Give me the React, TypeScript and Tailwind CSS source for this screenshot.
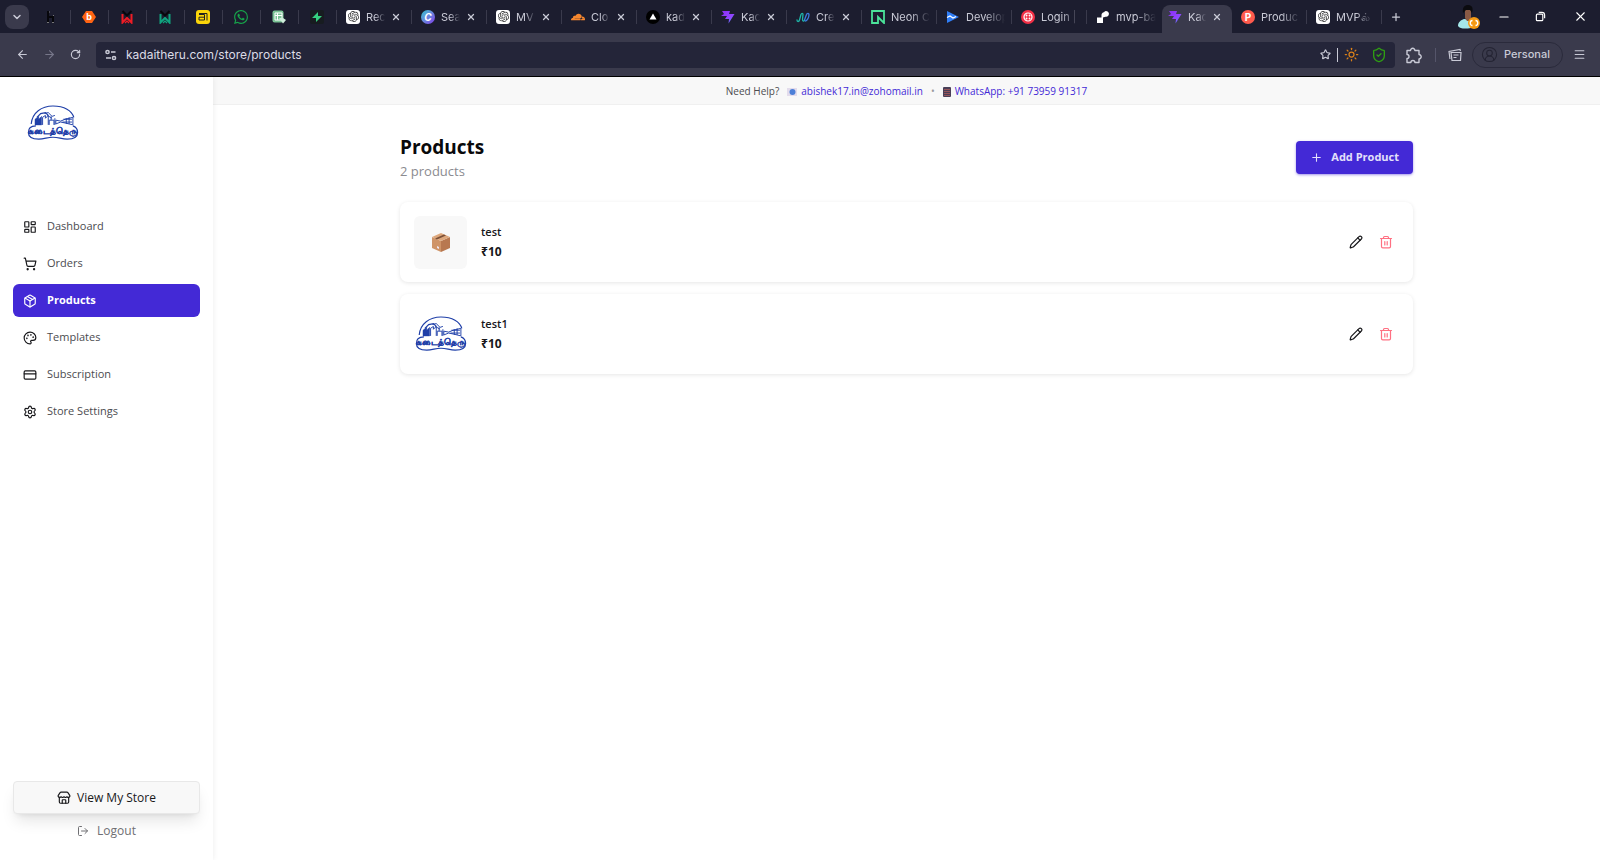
import type { ReactNode } from "react";
import {
  ArrowLeft,
  ArrowRight,
  ChevronDown,
  CreditCard,
  LayoutDashboard,
  LogOut,
  Menu,
  Minus,
  Package,
  Palette,
  Pencil,
  Plus,
  RotateCw,
  Settings,
  ShieldCheck,
  ShoppingCart,
  Star,
  Store,
  Sun,
  CircleUserRound,
  X,
} from "lucide-react";
import { SiCloudflare, SiOpenai, SiWhatsapp } from "react-icons/si";

function Letter({ char, className }: { char: string; className: string }) {
  return (
    <span className={`flex size-3.5 shrink-0 items-center justify-center text-[10px] leading-none font-bold ${className}`}>
      {char}
    </span>
  );
}

function DoubleW({ color }: { color: string }) {
  return (
    <svg viewBox="0 0 14 14" className="size-3.5" fill="none" strokeWidth="2">
      <path d="M2.500 4v8.500L7 8l4.500 4.500V4" stroke={color} />
      <path d="M5 13l2-2 2 2" stroke={color} strokeWidth="1.200" />
      <path d="M2.500 1L7 5.500 11.500 1" stroke="#07070c" />
    </svg>
  );
}

function ChatFavicon() {
  return (
    <span className="flex size-3.5 shrink-0 items-center justify-center rounded-[3px] bg-white">
      <SiOpenai size={11} color="#333" />
    </span>
  );
}

function KadaiFavicon() {
  return (
    <svg viewBox="0 0 14 14" className="size-3.5 shrink-0">
      <defs>
        <linearGradient id="kadai" x1="0" y1="0" x2="1" y2="1">
          <stop offset="0" stopColor="#8b2cf5" />
          <stop offset="0.600" stopColor="#9146ff" />
          <stop offset="1" stopColor="#3fa0ff" />
        </linearGradient>
      </defs>
      <path d="M1 1h8L8 4h5.500L7.500 13.500 8 9H4l2-3H0l3-2z" fill="url(#kadai)" />
    </svg>
  );
}

const iconTabs: { name: string; icon: ReactNode }[] = [
  {
    name: "h",
    icon: (
      <svg viewBox="0 0 14 14" className="size-3.5">
        <path d="M4 1v11M4 7h5v5" stroke="#07070c" strokeWidth="2" fill="none" />
        <path d="M3 12.500h2M8 12.500h2M5 2h1M9 5.500h1" stroke="#777" />
      </svg>
    ),
  },
  {
    name: "b",
    icon: (
      <span className="relative flex size-3.5 items-center justify-center">
        <svg viewBox="0 0 14 14" className="absolute size-3.5">
          <path d="M4 1h6l4 6-4 6H4L0 7z" fill="#ff6413" />
        </svg>
        <span className="relative text-[9px] leading-none font-bold text-white">b</span>
      </span>
    ),
  },
  { name: "w red", icon: <DoubleW color="#ee1c25" /> },
  { name: "w green", icon: <DoubleW color="#10a37f" /> },
  {
    name: "yellow",
    icon: (
      <svg viewBox="0 0 14 14" className="size-3.5">
        <rect width="14" height="14" rx="3" fill="#fbd50a" />
        <path d="M3 4.500h5.500V10H3V7.200h5M3 3.500h8v7" stroke="#222" fill="none" />
      </svg>
    ),
  },
  { name: "whatsapp", icon: <SiWhatsapp size={14} color="#17a34a" /> },
  {
    name: "sheets",
    icon: (
      <svg viewBox="0 0 14 14" className="size-3.5">
        <rect x="0.500" y="0.500" width="11" height="12" rx="2" fill="#7bc396" />
        <path d="M3 3h7v7H3zM3 5.500h7M5.500 3v7" stroke="#fff" fill="none" />
        <path d="M7 8l4 5.500L14 10l-3-2z" fill="#cfeedb" />
      </svg>
    ),
  },
  {
    name: "supabase",
    icon: (
      <svg viewBox="0 0 14 14" className="size-3.5">
        <rect width="14" height="14" rx="2" fill="#171c20" />
        <path d="M8 2L2 8h4v4l6-6H8z" fill="#35d07f" />
      </svg>
    ),
  },
];

type Tab = { title: string; icon: ReactNode; close?: boolean; active?: boolean; divider?: boolean };

const tabs: Tab[] = [
  { title: "Rec", icon: <ChatFavicon />, close: true, divider: true },
  {
    title: "Sea",
    icon: <Letter char="C" className="rounded-full bg-linear-to-br from-[#00c4cc] to-[#7d2ae8] text-white italic" />,
    close: true,
    divider: true,
  },
  { title: "MV", icon: <ChatFavicon />, close: true, divider: true },
  { title: "Clo", icon: <SiCloudflare size={14} color="#f6872f" className="shrink-0" />, close: true, divider: true },
  {
    title: "kad",
    icon: (
      <svg viewBox="0 0 14 14" className="size-3.5 shrink-0">
        <circle cx="7" cy="7" r="7" fill="#000" />
        <path d="M7 3.500l3.500 6h-7z" fill="#fff" />
      </svg>
    ),
    close: true,
    divider: true,
  },
  { title: "Kac", icon: <KadaiFavicon />, close: true, divider: true },
  {
    title: "Cre",
    icon: (
      <svg viewBox="0 0 14 14" className="size-3.5 shrink-0" fill="none" strokeWidth="1.300" strokeLinecap="round">
        <path d="M1 10c0 2 2 2 2.500 0L5 4.500C5.500 3 7 3 7 4.500l-.5 5C6.500 11.500 8 11.500 8.500 10" stroke="#1fb5a8" />
        <path d="M8.500 10l2-5.500C11 3 13 3 13 4.500c0 3-2 6.500-3.500 6.500" stroke="#3d7be0" />
      </svg>
    ),
    close: true,
    divider: true,
  },
  {
    title: "Neon C",
    icon: (
      <svg viewBox="0 0 14 14" className="size-3.5 shrink-0">
        <path d="M7 13H1V1h12v12L7 7z" fill="none" stroke="#4be39a" strokeWidth="1.800" />
      </svg>
    ),
    divider: true,
  },
  {
    title: "Develop",
    icon: (
      <svg viewBox="0 0 14 14" className="size-3.5 shrink-0">
        <path d="M1 1l12 6L1 13z" fill="#2f7df6" />
        <path d="M1 7.500l3-1.500 3 2 3-1.500" stroke="#fff" strokeWidth="1.200" fill="none" />
      </svg>
    ),
    divider: true,
  },
  {
    title: "Login | T",
    icon: (
      <svg viewBox="0 0 14 14" className="size-3.5 shrink-0">
        <circle cx="7" cy="7" r="7" fill="#f22f46" />
        <circle cx="7" cy="7" r="4" fill="none" stroke="#fff" strokeWidth="1.200" />
        <path d="M5.500 5.500h.1M8.500 5.500h.1M5.500 8.500h.1M8.500 8.500h.1" stroke="#fff" strokeWidth="1.800" strokeLinecap="round" />
      </svg>
    ),
    divider: true,
  },
  {
    title: "mvp-ba",
    icon: (
      <svg viewBox="0 0 14 14" className="size-3.5 shrink-0">
        <path d="M1 7.500h4.500V5c0-1.500 1-2.500 2.500-2.800a2.800 2.800 0 1 1 1.500 4.500L7 7.500V13H1z" fill="#fff" />
      </svg>
    ),
  },
  { title: "Kac", icon: <KadaiFavicon />, close: true, active: true },
  {
    title: "Produc",
    icon: <Letter char="P" className="rounded-full bg-[#ff5a4d] text-white" />,
    divider: true,
  },
  { title: "MVPல்", icon: <ChatFavicon />, divider: true },
];

function BrowserTabs() {
  return (
    <div className="flex h-[33px] items-center bg-[#1c1d2f] pl-[5px] text-[#c9cad6]">
      <button aria-label="Search tabs" className="flex size-6 shrink-0 items-center justify-center rounded-lg bg-[#3a3a4c]">
        <ChevronDown size={12} strokeWidth={3} />
      </button>
      <div className="ml-1 flex min-w-0 items-center self-stretch">
        {iconTabs.map((tab) => (
          <button key={tab.name} aria-label={tab.name} className="flex h-full w-[38px] shrink-0 items-center justify-between pl-[11px]">
            {tab.icon}
            <span className="h-3.5 w-px bg-[#3a3a4c]" />
          </button>
        ))}
        {tabs.map((tab, i) => (
          <div
            key={i}
            className={
              tab.active
                ? "mt-[5px] flex h-7 w-[70px] shrink-0 items-center rounded-t-lg bg-[#3a3a4c] pr-2.5 pb-1 pl-1.5"
                : "flex h-full w-[75px] shrink-0 items-center pl-[9px]"
            }
          >
            {tab.icon}
            <span className="ml-1.5 min-w-0 flex-1 overflow-hidden mask-r-from-50% text-[11px] leading-4 whitespace-nowrap">
              {tab.title}
            </span>
            {tab.close && (
              <button aria-label="Close tab" className={tab.active ? "ml-1.5" : "mr-2.5 ml-1.5"}>
                <X size={10} strokeWidth={3} />
              </button>
            )}
            {!tab.close && <span className="w-1.5" />}
            {tab.divider && <span className="h-3.5 w-px bg-[#3a3a4c]" />}
          </div>
        ))}
      </div>
      <button aria-label="New tab" className="ml-2 shrink-0">
        <Plus size={12} strokeWidth={2.5} />
      </button>
      <div className="ml-auto flex shrink-0 items-center pr-3 text-white">
        <svg viewBox="0 0 24 26" className="mr-4 h-[26px] w-6">
          <path d="M1 22c0-4 3-6 6-7l7 1v8c-6 1-11 1-13-2z" fill="#a5e8ea" />
          <path d="M8 6h6v8l-2 3h-2l-2-3z" fill="#8a5a45" />
          <path d="M6 9c-1-6 2-8 5-8s6 2 4 8l-2-3H9z" fill="#0b0b0f" />
          <circle cx="17" cy="19" r="6" fill="#f59a14" />
          <path d="M15.500 16.500c-3 0-3 5 0 5M18.500 16.500c3 0 3 5 0 5" stroke="#fff" strokeWidth="1.300" fill="none" />
        </svg>
        <button aria-label="Minimize" className="mr-6">
          <Minus size={14} />
        </button>
        <button aria-label="Restore" className="mr-[27px]">
          <svg viewBox="0 0 12 12" className="size-[11px]" fill="none" stroke="currentColor" strokeWidth="1.300">
            <rect x="1.500" y="3.500" width="7" height="7" rx="1" />
            <path d="M4 1.500h3.500a3 3 0 0 1 3 3V8" />
          </svg>
        </button>
        <button aria-label="Close window">
          <X size={15} strokeWidth={1.7} />
        </button>
      </div>
    </div>
  );
}

function BrowserToolbar() {
  return (
    <div className="flex h-[44px] items-center border-b border-black bg-[#3a3a4c] pr-3.5 pl-4 text-[#c9cad6]">
      <button aria-label="Back" className="mr-3.5">
        <ArrowLeft size={13} />
      </button>
      <button aria-label="Forward" className="mr-3.5 text-[#77778a]">
        <ArrowRight size={13} />
      </button>
      <button aria-label="Reload">
        <RotateCw size={11} strokeWidth={2.5} />
      </button>
      <div className="mr-2.5 ml-[15px] flex h-[26px] min-w-0 flex-1 items-center rounded-sm bg-[#242539] px-2">
        <svg viewBox="0 0 14 14" className="mr-2 size-3.5" fill="none" stroke="currentColor" strokeWidth="1.500">
          <circle cx="3.500" cy="4" r="1.600" />
          <path d="M7 4h4.500M2 10h5" />
          <circle cx="10" cy="10" r="1.600" />
        </svg>
        <input
          aria-label="Address"
          defaultValue="kadaitheru.com/store/products"
          className="min-w-0 flex-1 bg-transparent text-[12px] leading-4 text-[#dcdce6] outline-none"
        />
        <Star size={11} strokeWidth={2.5} />
        <span className="mx-1.5 h-3.5 w-px bg-[#c9cad6]" />
        <Sun size={15} color="#d9801a" className="mr-3" />
        <ShieldCheck size={16} color="#2f9e13" />
      </div>
      <button aria-label="Extensions">
        <svg viewBox="0 0 18 18" className="size-[18px]" fill="none" stroke="currentColor" strokeWidth="1.400" strokeLinejoin="round">
          <path d="M2 4.500h3.500a2.200 2.200 0 1 1 4.400 0H14v4a2.200 2.200 0 1 1 0 4.400V16.500H9.900a2 2 0 0 0-4 0H2v-4a2 2 0 0 0 0-4z" />
        </svg>
      </button>
      <span className="mx-3 h-3.5 w-px bg-[#55556a]" />
      <button aria-label="Reading list" className="mr-2.5">
        <svg viewBox="0 0 14 14" className="size-3.5" fill="none" stroke="currentColor" strokeWidth="1.200">
          <path d="M3 4.500h10l-.5 8H4zM2 11L1 3.500 12 1.500l.5 1.500M5.500 7h5M5.500 9.500h3" />
        </svg>
      </button>
      <button className="mr-2.5 flex h-[26px] items-center gap-1.5 rounded-full border border-[#2a2a3b] pr-3 pl-2 text-[11px] font-medium">
        <CircleUserRound size={17} color="#242433" strokeWidth={1.5} />
        Personal
      </button>
      <button aria-label="Menu">
        <Menu size={13} />
      </button>
    </div>
  );
}

function StoreLogo() {
  return (
    <svg viewBox="0 0 54 38" className="h-9 w-[52px]" fill="none" stroke="#1f3fa8">
      <path d="M4 20C5 8 15 1 27 1c12 0 20 5 22 12" strokeWidth="1.200" />
      <path d="M8 21v-6l4-3v3l3-3v9z" fill="#1f3fa8" strokeWidth="0.500" />
      <path d="M10 13l4-4 5-1 3 3" strokeWidth="1.300" />
      <path d="M16 21v-8l3-2v3l3-3v10M18 9l4-1 4 4 3-1M21 11l5 3M23 21v-5h5v5M25 12v4M29 14v7" />
      <path d="M30 16l5 1 5-2 8-2v8l-8-2-5-1-5 2zM41 14v6M44 13v7M47 15h-9M47 18h-10" />
      <path d="M9 22C3 22 1 25 1 29c0 5 5 7 11 7 6 0 9-2 15-2s9 2 15 2c6 0 11-2 11-7 0-4-2-6-5-7" strokeWidth="1.200" />
      <text x="27" y="31" textAnchor="middle" fontSize="9" fontWeight="700" fill="#1f3fa8" stroke="#1f3fa8" strokeWidth="0.300">
        கடைத்தெரு
      </text>
    </svg>
  );
}

function BoxPicture() {
  return (
    <svg viewBox="0 0 20 20" className="size-5">
      <path d="M1 5l9 4v11l-9-4z" fill="#cf9468" />
      <path d="M19 5l-9 4v11l9-4z" fill="#b87850" />
      <path d="M1 5l9-4 9 4-9 4z" fill="#dda77c" />
      <path d="M4 6.500l9-4 2 1-9 4z" fill="#7b5038" />
      <path d="M6 14l2 1v2l-2-1z" fill="#efe6f0" />
    </svg>
  );
}

function TrashIcon() {
  return (
    <svg viewBox="0 0 14 14" className="size-3.5" fill="none" stroke="currentColor" strokeWidth="1.200" strokeLinecap="round">
      <path d="M1.500 3.500h11M4.500 3.500v-1c0-.6.4-1 1-1h3c.6 0 1 .4 1 1v1M2.500 3.500v8c0 .8.5 1.300 1.300 1.300h6.400c.8 0 1.300-.5 1.300-1.300v-8M5.800 6.500v3.500M8.200 6.500v3.500" />
    </svg>
  );
}

const navItems = [
  { label: "Dashboard", icon: LayoutDashboard },
  { label: "Orders", icon: ShoppingCart },
  { label: "Products", icon: Package, active: true },
  { label: "Templates", icon: Palette },
  { label: "Subscription", icon: CreditCard },
  { label: "Store Settings", icon: Settings },
];

function Sidebar() {
  return (
    <aside className="z-10 flex w-[213px] shrink-0 flex-col bg-white px-[13px] pb-5 shadow-[0_0_6px_rgba(0,0,0,0.08)]">
      <a href="#" aria-label="Store home" className="mt-7 ml-3.5 block h-[105px]">
        <StoreLogo />
      </a>
      <nav className="flex flex-col gap-1">
        {navItems.map((item) => (
          <a
            key={item.label}
            href="#"
            className={
              item.active
                ? "flex h-[33px] items-center gap-2.5 rounded-md bg-[#4329d6] px-2.5 font-bold text-white"
                : "flex h-[33px] items-center gap-2.5 rounded-md px-2.5 text-[#4b4b4f]"
            }
          >
            <item.icon size={14} color={item.active ? "#ffffff" : "#18181b"} />
            {item.label}
          </a>
        ))}
      </nav>
      <div className="mt-auto flex flex-col items-center">
        <button className="flex h-[33px] w-full items-center justify-center gap-1.5 rounded-sm border border-[#e8e8e8] bg-[#f8f8f8] text-[12px] font-medium text-[#18181b] shadow-lg">
          <Store size={14} />
          View My Store
        </button>
        <button className="mt-2 flex items-center gap-2 text-[12px] leading-[18px] text-[#6f6f73]">
          <LogOut size={12} />
          Logout
        </button>
      </div>
    </aside>
  );
}

function HelpBar() {
  return (
    <div className="flex h-7 items-center justify-center gap-2 border-b border-[#f0f0f0] bg-[#f8f8f8] pt-0.5 text-[10px] font-medium text-[#4b4b4f]">
      <span>Need Help?</span>
      <a href="#" className="flex items-center gap-1 text-[#4329d6]">
        <svg viewBox="0 0 10 10" className="size-2.5">
          <path d="M0 1h10v8H0z" fill="#e3dcec" />
          <circle cx="5.500" cy="5" r="3" fill="#4d80d8" />
        </svg>
        abishek17.in@zohomail.in
      </a>
      <span className="text-[#9a9a9e]">•</span>
      <a href="#" className="flex items-center gap-1 text-[#4329d6]">
        <svg viewBox="0 0 8 10" className="h-2.5 w-2">
          <rect width="8" height="10" rx="1" fill="#4a4058" />
          <path d="M2 2v7M4 2v7M6 2v7" stroke="#e0685a" strokeDasharray="1 1" />
        </svg>
        WhatsApp: +91 73959 91317
      </a>
    </div>
  );
}

const products = [
  { name: "test", price: 10, picture: <BoxPicture /> },
  { name: "test1", price: 10, picture: <StoreLogo /> },
];

function ProductsPage() {
  return (
    <main className="mx-auto w-full max-w-[1013px] pt-7">
      <div className="flex items-center justify-between">
        <div>
          <h1 className="text-[19px] leading-7 font-bold text-[#09090b]">Products</h1>
          <p className="text-[13px] leading-5 text-[#8b8b90]">{products.length} products</p>
        </div>
        <button className="flex h-[33px] items-center gap-2 rounded-sm bg-[#4329d6] px-3.5 text-[11px] font-bold text-[#e4e0fb] shadow-sm shadow-[#4329d6]/40">
          <Plus size={13} />
          Add Product
        </button>
      </div>
      <ul className="mt-[21px] flex flex-col gap-3">
        {products.map((product) => (
          <li key={product.name} className="flex h-20 items-center rounded-lg bg-white px-3.5 shadow-[0_1px_4px_rgba(0,0,0,0.1)]">
            <div
              className={
                product.name === "test"
                  ? "flex size-[53px] items-center justify-center rounded-md bg-[#f8f8f8]"
                  : "flex size-[53px] items-center justify-center"
              }
            >
              {product.picture}
            </div>
            <div className="ml-3.5 flex-1 leading-5 text-[#18181b]">
              <h2 className="text-[11px] font-semibold">{product.name}</h2>
              <p className="text-[12px] font-bold">₹{product.price}</p>
            </div>
            <button aria-label={`Edit ${product.name}`} className="mr-4 text-[#18181b]">
              <Pencil size={14} />
            </button>
            <button aria-label={`Delete ${product.name}`} className="mr-1.5 text-[#ff7082]">
              <TrashIcon />
            </button>
          </li>
        ))}
      </ul>
    </main>
  );
}

export default function App() {
  return (
    <div className="flex min-h-screen flex-col bg-white">
      <header className="font-['Inter',sans-serif]">
        <BrowserTabs />
        <BrowserToolbar />
      </header>
      <div className="flex flex-1 font-['Open_Sans','Noto_Sans',sans-serif] text-[11px]">
        <Sidebar />
        <div className="min-w-0 flex-1">
          <HelpBar />
          <ProductsPage />
        </div>
      </div>
    </div>
  );
}
